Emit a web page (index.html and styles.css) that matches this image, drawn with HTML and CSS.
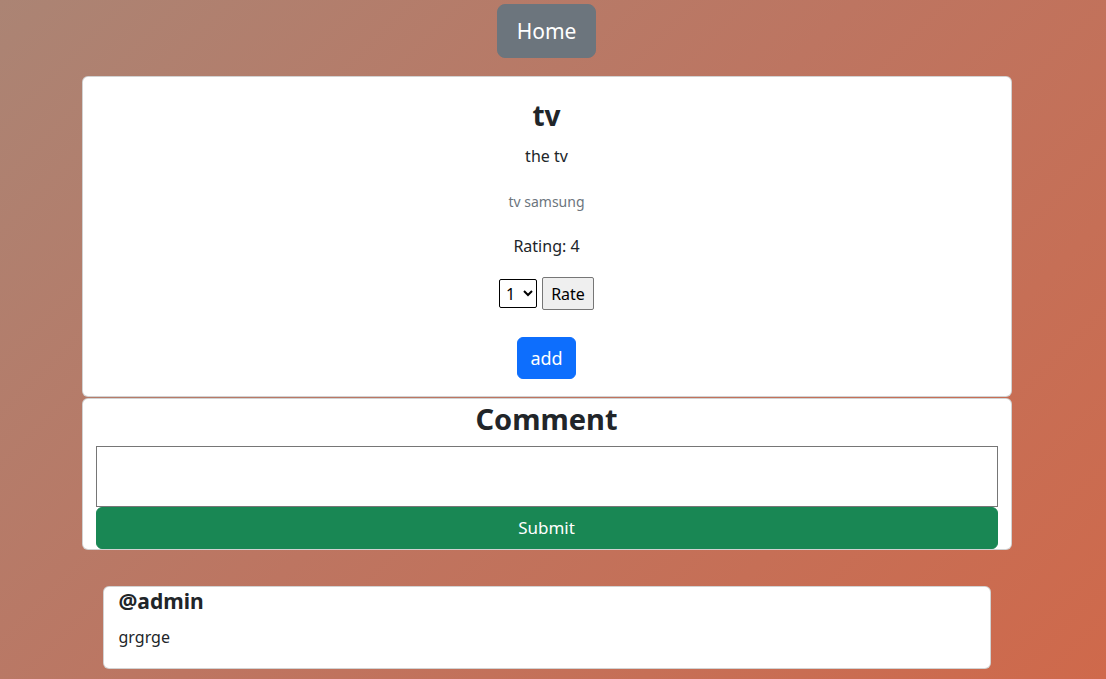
FILE: index.html
```html
<!DOCTYPE html>
<html lang="en">
<head>
<meta charset="utf-8">
<title>tv</title>
<link rel="stylesheet" href="styles.css">
</head>
<body>
  <nav class="topnav">
    <a class="btn-home" href="#">Home</a>
  </nav>
  <main class="page">
    <section class="card product">
      <h2 class="product-title">tv</h2>
      <p class="product-sub">the tv</p>
      <p class="product-desc">tv samsung</p>
      <p class="product-rating">Rating: 4</p>
      <form class="rate-form">
        <select class="rate-select">
          <option>1</option><option>2</option><option>3</option><option>4</option><option>5</option>
        </select>
        <button type="button" class="rate-btn">Rate</button>
      </form>
      <button type="button" class="btn-add">add</button>
    </section>
    <section class="card comment-form">
      <h2 class="comment-title">Comment</h2>
      <textarea class="comment-input"></textarea>
      <button type="button" class="btn-submit">Submit</button>
    </section>
    <article class="comment">
      <h3 class="comment-user">@admin</h3>
      <p class="comment-text">grgrge</p>
    </article>
  </main>
</body>
</html>
```
FILE: styles.css
```css
html, body {
  margin: 0;
  padding: 0;
}
body {
  min-height: 679px;
  padding-right: 13px;
  background: linear-gradient(135deg, #ab8474 0%, #bd7561 48%, #cf694b 100%);
  font-family: "Noto Sans", "Open Sans", sans-serif;
  color: #212529;
}
.topnav {
  display: flex;
  justify-content: center;
  padding-top: 4px;
}
.btn-home {
  display: block;
  background: #6c757d;
  color: #fff;
  text-decoration: none;
  font-size: 21px;
  line-height: 30px;
  padding: 11px 19px;
  border: 1px solid #6c757d;
  border-radius: 8px;
}
.page {
  width: 930px;
  margin: 18px auto 0;
  display: flex;
  flex-direction: column;
}
.card {
  background: #fff;
  border: 1px solid rgba(0,0,0,.175);
  border-radius: 6px;
  box-sizing: border-box;
}
.product {
  display: flex;
  flex-direction: column;
  align-items: center;
  padding: 21px 16px 17px;
  height: 321px;
}
.product p { margin: 0; }
.product-title {
  margin: 0;
  font-size: 28px;
  line-height: 34px;
  font-weight: 700;
}
.product-sub {
  margin-top: 12px !important;
  font-size: 16px;
  line-height: 24px;
}
.product-desc {
  margin-top: 23px !important;
  font-size: 14px;
  line-height: 21px;
  color: #6c757d;
}
.product-rating {
  margin-top: 22px !important;
  font-size: 16px;
  line-height: 24px;
}
.rate-form {
  margin-top: 19px;
  display: flex;
  gap: 5px;
  align-items: center;
  height: 33px;
}
.rate-select {
  font-family: "Noto Sans", sans-serif;
  font-size: 16px;
  border: 1px solid #000;
  border-radius: 2px;
  background: #fff;
  width: 38px;
  height: 29px;
  padding: 0 0 0 2px;
  color: #000;
}
.rate-btn {
  font-family: "Noto Sans", sans-serif;
  font-size: 16px;
  background: #efefef;
  border: 1px solid #767676;
  border-radius: 2px;
  color: #000;
  padding: 0 6px;
  width: 52px;
  height: 33px;
}
.btn-add {
  margin-top: 27px;
  background: #0d6efd;
  color: #fff;
  border: 1px solid #0d6efd;
  border-radius: 6px;
  font-family: "Noto Sans", sans-serif;
  font-size: 18px;
  line-height: 24px;
  padding: 8px 12px;
  width: 59px;
}
.comment-form {
  margin-top: 1px;
  padding: 1px 13px 0;
  display: flex;
  flex-direction: column;
}
.comment-title {
  margin: 0;
  text-align: center;
  font-size: 29px;
  line-height: 38px;
  font-weight: 700;
}
.comment-input {
  display: block;
  margin-top: 8px;
  height: 61px;
  box-sizing: border-box;
  border: 1px solid #767676;
  border-radius: 0;
  resize: none;
}
.btn-submit {
  display: block;
  height: 42px;
  padding: 0 0 2px;
  background: #198754;
  color: #fff;
  border: 1px solid #198754;
  border-radius: 6px;
  font-family: "Noto Sans", sans-serif;
  font-size: 17px;
}
.comment {
  margin: 36px 21px 0 21px;
  background: #fff;
  border: 1px solid rgba(0,0,0,.175);
  border-radius: 6px;
  height: 83px;
  box-sizing: border-box;
  padding: 0 15px 0;
}
.comment-user {
  margin: 0;
  font-size: 21px;
  line-height: 28px;
  font-weight: 700;
}
.comment-text {
  margin: 10px 0 0;
  font-size: 16px;
  line-height: 24px;
}
```
